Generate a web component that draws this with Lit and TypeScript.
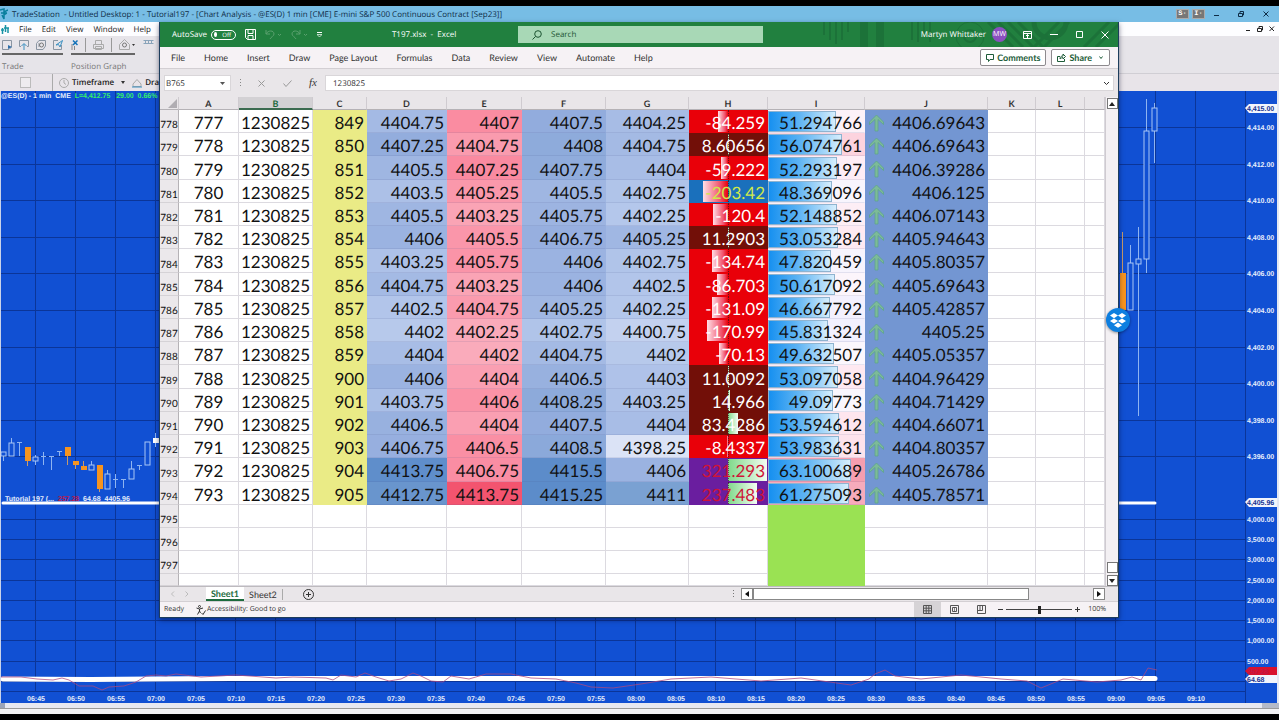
import { LitElement, html, svg, css } from "lit";
import { customElement } from "lit/decorators.js";
import { classMap } from "lit/directives/class-map.js";
import { styleMap } from "lit/directives/style-map.js";

type Stop = [number, number[]];

/* Colour scales of the conditional formatting. */
const BLUE: Stop[] = [
  [4398, [221, 229, 247]],
  [4402.5, [178, 197, 234]],
  [4407, [149, 174, 222]],
  [4411, [122, 161, 210]],
  [4414, [92, 140, 202]],
];
const PINK: Stop[] = [
  [4402, [250, 171, 187]],
  [4404.75, [250, 155, 174]],
  [4407.25, [250, 138, 160]],
  [4413.75, [243, 84, 111]],
];
const HEAT: Stop[] = [
  [45, [240, 238, 254]],
  [50, [252, 248, 253]],
  [53, [254, 234, 242]],
  [56, [252, 212, 223]],
  [63, [246, 158, 175]],
];

function shade(stops: Stop[], v: number): string {
  const last = stops.length - 1;
  if (v <= stops[0][0]) return `rgb(${stops[0][1].join(",")})`;
  if (v >= stops[last][0]) return `rgb(${stops[last][1].join(",")})`;
  const i = stops.findIndex((s) => s[0] > v);
  const [a, ca] = stops[i - 1];
  const [b, cb] = stops[i];
  const t = (v - a) / (b - a);
  return `rgb(${ca.map((c, k) => Math.round(c + (cb[k] - c) * t)).join(",")})`;
}

const ROWS: string[][] = `
777 849 4404.75 4407 4407.5 4404.25 -84.259 51.294766 4406.69643
778 850 4407.25 4404.75 4408 4404.75 8.60656 56.074761 4406.69643
779 851 4405.5 4407.25 4407.75 4404 -59.222 52.293197 4406.39286
780 852 4403.5 4405.25 4405.5 4402.75 -203.42 48.369096 4406.125
781 853 4405.5 4403.25 4405.75 4402.25 -120.4 52.148852 4406.07143
782 854 4406 4405.5 4406.75 4405.25 11.2903 53.053284 4405.94643
783 855 4403.25 4405.75 4406 4402.75 -134.74 47.820459 4405.80357
784 856 4404.75 4403.25 4406 4402.5 -86.703 50.617092 4405.69643
785 857 4402.5 4404.75 4405.25 4402.25 -131.09 46.667792 4405.42857
786 858 4402 4402.25 4402.75 4400.75 -170.99 45.831324 4405.25
787 859 4404 4402 4404.75 4402 -70.13 49.632507 4405.05357
788 900 4406 4404 4406.5 4403 11.0092 53.097058 4404.96429
789 901 4403.75 4406 4408.25 4403.25 14.966 49.09773 4404.71429
790 902 4406.5 4404 4407.5 4404 83.4286 53.594612 4404.66071
791 903 4406.75 4406.5 4408.5 4398.25 -8.4337 53.983631 4404.80357
792 904 4413.75 4406.75 4415.5 4406 321.293 63.100689 4405.26786
793 905 4412.75 4413.75 4415.25 4411 237.483 61.275093 4405.78571
`.trim().split("\n").map((l) => l.split(" "));

@customElement("price-chart")
export class PriceChart extends LitElement {
  static styles = css`
    :host { display: flex; flex: 1; min-height: 0; background: #1150d3; border-left: 1px solid #c9d3ea; border-right: 2px solid #e4e8f2; font-family: "Liberation Sans", Arial, sans-serif; overflow: hidden; }
    .plot { flex: 1; min-width: 0; height: 100%; overflow: hidden; }
    .axis { width: 32px; height: 100%; overflow: visible; }
    .grid { stroke: #0b3598; stroke-width: 1; }
    .wick { stroke: #8fb4f0; stroke-width: 1; }
    .box { fill: #1150d3; stroke: #a9c6f5; stroke-width: 1; }
    .down { fill: #f7941f; }
    .wick-down { stroke: #c79a6a; stroke-width: 1; }
    .lbl { fill: #e6eefc; font-size: 7px; font-weight: 700; }
    .time { text-anchor: middle; }
    .green { fill: #35f06a; }
    .red { fill: #c01848; }
    .dark { fill: #12308f; font-size: 7px; font-weight: 700; }
    .band { fill: none; stroke: #fff; stroke-linecap: round; }
    .trace { fill: none; stroke: #b0487f; stroke-width: 1; opacity: 0.75; }
  `;

  /* Canvas y positions are measured from the top of the plot. */
  private upper: [string, number][] = ["14", "12", "10", "08", "06", "04", "02", "00"]
    .map((n, i): [string, number] => [`4,4${n}.00`, Math.round(36 + i * 36.6)])
    .concat([["4,398.00", 329], ["4,396.00", 365]]);

  private lower: [string, number][] = [
    ["4,000.00", 428], ["3,500.00", 448], ["3,000.00", 468], ["2,500.00", 489], ["2,000.00", 509],
    ["1,500.00", 529], ["1,000.00", 549], ["500.00", 570],
  ];

  /* x, wick top, wick bottom, body top, body bottom, kind */
  private candles: [number, number, number, number, number, string][] = [
    [3, 361, 370, 361, 365, "u"], [11, 347, 365, 352, 365, "u"], [19, 351, 365, 351, 351, "t"],
    [27, 356, 375, 356, 370, "d"], [35, 364, 374, 366, 370, "u"], [43, 361, 374, 365, 365, "t"],
    [51, 365, 379, 365, 365, "t"], [59, 360, 365, 360, 360, "t"], [67, 356, 374, 356, 365, "d"],
    [75, 370, 378, 370, 374, "d"], [83, 370, 379, 375, 379, "d"], [91, 370, 379, 374, 379, "u"],
    [99, 374, 401, 374, 398, "d"], [107, 379, 398, 383, 398, "u"], [115, 383, 397, 388, 388, "t"],
    [123, 388, 397, 388, 388, "t"], [131, 370, 388, 378, 388, "u"], [139, 374, 379, 374, 374, "t"],
    [147, 351, 374, 351, 374, "u"], [155, 342, 356, 347, 352, "w"],
    [1122, 141, 182, 182, 219, "d"], [1130, 154, 219, 172, 219, "u"], [1138, 136, 325, 168, 173, "u"],
    [1146, 8, 182, 40, 168, "u"], [1154, 12, 72, 17, 40, "u"],
  ];

  private body(x: number, top: number, bottom: number, kind: string) {
    if (kind === "t") {
      return svg`<line class="wick" x1=${x - 3} x2=${x + 2} y1=${top + 0.5} y2=${top + 0.5}></line>`;
    }
    const width = kind === "u" ? 5 : 6;
    const fill = kind === "w" ? "#fff" : null;
    return svg`<rect class=${kind === "u" ? "box" : kind === "d" ? "down" : ""} fill=${fill ?? "none"} x=${x - 3} y=${top} width=${width} height=${bottom - top}></rect>`;
  }

  render() {
    const times: string[] = [];
    for (let m = 6 * 60 + 45; m <= 9 * 60 + 10; m += 5) {
      times.push(`${String(Math.floor(m / 60)).padStart(2, "0")}:${String(m % 60).padStart(2, "0")}`);
    }
    const ys = [...this.upper, ...this.lower].map((l) => l[1]);
    return html`
      <svg class="plot" role="img" aria-label="One minute price chart">
        ${[...ys, 590, 600].map((y) => svg`<line class="grid" x1="0" x2="100%" y1=${y + 0.5} y2=${y + 0.5}></line>`)}
        ${times.map((t, i) => svg`
          <line class="grid" x1=${34.5 + i * 40} x2=${34.5 + i * 40} y1="0" y2="600"></line>
          <text class="lbl time" x=${35 + i * 40} y="610">${t}</text>`)}
        ${this.candles.map(([x, wt, wb, bt, bb, k]) => svg`
          <line class=${k === "d" ? "wick-down" : "wick"} x1=${x - 0.5} x2=${x - 0.5} y1=${wt} y2=${wb}></line>
          ${this.body(x, bt, bb, k)}`)}
        <path class="band" stroke-width="3" d="M2 412H1154"></path>
        <path class="band" stroke-width="5" d="M2 588L90 588.600 150 588 230 587.500 H1154"></path>
        <path class="trace" d="M0 586 20 586 36 588 52 589 61 587 68 589 78 595 92 595 101 599 108 596 123 595 135 591 145 585 155 584 165 585 175 583 200 586 235 584 275 587 292 586 325 587 332 589 340 584 355 586 364 582 375 586 388 590 400 588 412 582 420 585 430 590 442 591 450 585 468 588 485 583 510 583 530 587 555 588 575 592 590 596 612 597 640 593 670 588 710 586 760 590 800 587 850 594 868 588 874 583 884 579 894 585 920 588 960 584 1000 588 1026 590 1040 597 1062 588 1096 591 1120 589 1131 586 1140 589 1147 577 1156 579"></path>
        <text class="lbl" x="0" y="7">@ES(D) - 1 min&#160; CME&#160; <tspan class="green">L=4,412.75&#160;&#160; 29.00&#160; 0.66%</tspan></text>
        <text class="lbl" x="4" y="410">Tutorial 197 (...&#160; <tspan class="red">257.28</tspan>&#160; 64.68&#160; 4405.96</text>
      </svg>
      <svg class="axis" role="img" aria-label="Price scale">
        <line class="grid" x1="0.500" x2="0.500" y1="0" y2="612"></line>
        ${[...this.upper, ...this.lower].map(([t, y]) => svg`<text class="lbl" x="2" y=${y + 3}>${t}</text>`)}
        <path fill="#f2f5fc" d="M0 17 4 13H32V22H4Z"></path><text class="dark" x="2" y="20">4,415.00</text>
        <path fill="#f2f5fc" d="M0 411 4 407H32V416H4Z"></path><text class="dark" x="2" y="414">4,405.96</text>
        <path fill="#d8122c" d="M0 580 4 576H32V584H4Z"></path><text class="lbl red" x="2" y="583">257.28</text>
        <path fill="#f2f5fc" d="M0 588 4 584H32V592H4Z"></path><text class="dark" x="2" y="591">64.68</text>
      </svg>`;
  }
}

@customElement("sheet-grid")
export class SheetGrid extends LitElement {
  static styles = css`
    :host { display: flex; flex: 1; min-height: 0; font-family: Lato, "Open Sans", sans-serif; color: #111; }
    table { flex: 1; min-width: 0; display: grid; grid-template-rows: 13px 1fr; background: #fff; }
    thead, tbody { display: grid; min-height: 0; }
    tbody { grid-template-rows: repeat(20, minmax(0, 2fr)) minmax(0, 1fr); }
    tr { display: grid; grid-template-columns: 19px 60px 74px 54px 80px 75px 84px 83px 79px 97px 123px 48px 49px 1fr; min-height: 0; }
    th, td { padding: 0; box-sizing: border-box; min-width: 0; position: relative; overflow: hidden; white-space: nowrap; }
    thead th { background: #e9e6e9; border-right: 1px solid #cfcbd0; border-bottom: 1px solid #b5b2b6; font-size: 9px; line-height: 14px; font-weight: 700; color: #333; }
    thead th.on { background: #d3d1d4; border-bottom: 2px solid #3b6b50; color: #1e6b40; }
    .corner { display: flex; align-items: flex-end; justify-content: flex-end; }
    tbody th { background: #ebe8eb; border-right: 1px solid #b5b2b6; border-bottom: 1px solid #d5d2d6; font-size: 10px; font-weight: 400; display: flex; align-items: flex-end; justify-content: center; line-height: 13px; }
    td { border-right: 1px solid #dcdae0; border-bottom: 1px solid #dcdae0; display: flex; align-items: center; justify-content: flex-end; padding: 4px 2px 0 0; font-size: 17px; line-height: 18px; }
    td.mid { justify-content: center; padding-right: 0; }
    td.fill { border-right-color: transparent; border-bottom-color: rgba(70, 80, 140, 0.12); }
    td.year { background: #eaeb86; border-color: #eaeb86; }
    td.avg { background: #7396d2; border-color: #7396d2; }
    td.green { background: #9ae253; border-color: #9ae253; }
    td.h { background: #e90009; color: #fff; border-color: transparent; }
    td.h.pos { background: #720f08; }
    td.h.low { background: #1a70bc; color: #cfe94a; }
    td.h.high { background: #6a1e9f; color: #cf1437; }
    td span { position: relative; }
    .bar { position: absolute; top: 1px; bottom: 0; }
    .neg { right: 50%; background: linear-gradient(90deg, #ffdfe6, #f0506a 70%, #e90009); }
    .up { left: 50%; background: linear-gradient(90deg, #7fd98a, #f4fcf2); }
    .zero { position: absolute; left: 50%; top: 0; bottom: 0; border-left: 1px dotted rgba(60, 20, 30, 0.7); }
    .data { left: 0; background: linear-gradient(90deg, #1690f0, #5db3f3 45%, #d6eefd); border: 1px solid #8fb3cf; box-sizing: border-box; }
    .arrow { position: absolute; left: 3px; top: 4px; }
    .vscroll { width: 13px; background: #f3f0f3; border-left: 1px solid #cfcbd0; display: flex; flex-direction: column; align-items: center; box-sizing: border-box; padding-top: 1px; }
    .sb { width: 11px; height: 11px; box-sizing: border-box; border: 1px solid #777; background: #fff; padding: 0; display: flex; align-items: center; justify-content: center; flex: none; }
    .track { flex: 1; display: flex; align-items: flex-end; padding-bottom: 2px; }
  `;

  private row(r: string[], i: number) {
    const [a, c, d, e, f, g, h, s, j] = r;
    const hv = Number(h);
    const bar = `${(Math.min(Math.abs(hv), 321) / 321) * 50}%`;
    const color = (stops: Stop[], v: string) => styleMap({ background: shade(stops, Number(v)) });
    return html`<tr>
      <th scope="row">${778 + i}</th>
      <td class="mid">${a}</td>
      <td class="mid">1230825</td>
      <td class="year">${c}</td>
      <td class="fill" style=${color(BLUE, d)}>${d}</td>
      <td class="fill" style=${color(PINK, e)}>${e}</td>
      <td class="fill" style=${color(BLUE, f)}>${f}</td>
      <td class="fill" style=${color(BLUE, g)}>${g}</td>
      <td class=${classMap({ h: true, pos: hv > 0, low: hv < -200, high: hv > 200 })}>
        <i class=${hv < 0 ? "bar neg" : "bar up"} style=${styleMap({ width: bar })}></i><i class="zero"></i><span>${h}</span>
      </td>
      <td class="fill" style=${color(HEAT, s)}>
        <i class="bar data" style=${styleMap({ width: `${Number(s) * 1.375}%` })}></i><span>${s}</span>
      </td>
      <td class="avg">
        <svg class="arrow" width="17" height="18" viewBox="0 0 17 18"><path d="M8.500 1 15.500 8V10.500L10 5.500V17H7V5.500L1.500 10.500V8Z" fill="#7dbb98" stroke="#5da48c" stroke-width="0.800"></path></svg>
        <span>${j}</span>
      </td>
      <td></td><td></td><td></td>
    </tr>`;
  }

  render() {
    const blank = [795, 796, 797, ""];
    return html`
      <table aria-label="Sheet1">
        <thead><tr>
          <th class="corner" aria-label="Select all"><svg width="11" height="10"><path d="M10 0V9H1Z" fill="#b0adb2"></path></svg></th>
          ${[..."ABCDEFGHIJKL"].map((l) => html`<th scope="col" class=${l === "B" ? "on" : ""}>${l}</th>`)}
          <th></th>
        </tr></thead>
        <tbody>
          ${ROWS.map((r, i) => this.row(r, i))}
          ${blank.map((n) => html`<tr><th scope="row">${n}</th>${[..."ABCDEFGHIJKLM"].map((l) => html`<td class=${l === "I" ? "green" : ""}></td>`)}</tr>`)}
        </tbody>
      </table>
      <div class="vscroll">
        <button class="sb" aria-label="Scroll up"><svg width="6" height="4"><path d="M0 4 3 0 6 4Z" fill="#222"></path></svg></button>
        <div class="track"><div class="sb"></div></div>
        <button class="sb" aria-label="Scroll down"><svg width="6" height="4"><path d="M0 0 3 4 6 0Z" fill="#222"></path></svg></button>
      </div>`;
  }
}

@customElement("excel-window")
export class ExcelWindow extends LitElement {
  static styles = css`
    :host { display: flex; flex-direction: column; background: #f6f2f5; border: 1px solid #1d3d5c; border-top: 0; box-sizing: border-box; font-family: "Open Sans", "Noto Sans", sans-serif; font-size: 8px; color: #333; box-shadow: 0 2px 5px rgba(0, 0, 40, 0.5); text-rendering: geometricPrecision; }
    button { font: inherit; color: inherit; background: none; border: 0; padding: 0; white-space: nowrap; display: flex; align-items: center; text-rendering: inherit; }
    input { font: inherit; color: inherit; border: 0; padding: 0; margin: 0; outline: 0; min-width: 0; text-rendering: inherit; }
    svg { display: block; flex: none; }
    .line { fill: none; stroke: currentColor; stroke-width: 1; }
    .title { position: relative; height: 25px; flex: none; display: flex; align-items: center; background: #21803f; color: #fff; padding-left: 5px; }
    .art { position: absolute; right: 0; top: 0; height: 25px; }
    .left, .right { flex: 1; display: flex; align-items: center; position: relative; }
    .left { padding-left: 7px; }
    .right { justify-content: flex-end; padding-right: 9px; }
    .autosave { display: flex; align-items: center; gap: 4px; }
    .switch { width: 25px; height: 10px; box-sizing: border-box; border: 1px solid #fff; border-radius: 5px; padding: 0 4px 0 2px; gap: 5px; font-size: 6px; justify-content: space-between; }
    .knob { width: 5px; height: 5px; border-radius: 50%; background: #fff; }
    .save { margin-left: 9px; }
    .hist { margin-left: 9px; display: flex; align-items: center; gap: 9px; color: #5aa06e; }
    .name { margin-left: 70px; white-space: pre; }
    .search { position: relative; width: 245px; height: 17px; flex: none; background: #a8d8b6; display: flex; align-items: center; color: #1d5432; gap: 9px; padding-left: 14px; box-sizing: border-box; }
    .search input { background: transparent; flex: 1; }
    .search input::placeholder { color: #1d5432; opacity: 1; }
    .avatar { width: 15px; height: 15px; border-radius: 50%; background: #8a4fc0; font-size: 7px; display: flex; align-items: center; justify-content: center; margin-left: 6px; }
    .wc { display: flex; align-items: center; gap: 18px; margin-left: 16px; }
    .ribbon { flex: none; height: 22px; display: flex; align-items: center; gap: 19px; padding: 0 8px 0 11px; background: #f6f2f5; border-bottom: 1px solid #d3cfd3; box-sizing: border-box; font-family: Lato, "Open Sans", sans-serif; font-size: 9px; }
    .acts { margin-left: auto; display: flex; gap: 5px; }
    .act { box-sizing: border-box; height: 17px; border: 1px solid #8d8a8e; border-radius: 2px; background: #fff; color: #1d5c38; font-weight: 700; padding: 0 5px; gap: 3px; }
    .formula { flex: none; height: 28px; display: flex; align-items: center; padding: 0 4px; background: #e9e6e9; }
    .field { background: #fff; height: 16px; display: flex; align-items: center; box-sizing: border-box; border: 1px solid #d9d6d9; padding: 0 5px 0 1px; }
    .ref { width: 67px; }
    .ref input { width: 55px; }
    .tools { width: 94px; display: flex; align-items: center; justify-content: space-between; color: #999; padding: 0 8px 0 9px; box-sizing: border-box; }
    .fx { font: italic 11px "Liberation Serif", serif; color: #333; }
    .value { flex: 1; padding: 0 3px 0 7px; }
    .value input { flex: 1; }
    .tabs { flex: none; height: 15px; display: flex; align-items: center; background: #e9e6e9; border-top: 1px solid #bdbabe; box-sizing: border-box; padding: 0 13px 0 11px; font-size: 9px; }
    .nav { display: flex; gap: 10px; color: #bbb; width: 35px; }
    .tab { height: 14px; padding: 0 5px; }
    .tab.on { background: #fff; color: #1d6b3d; font-family: Lato, sans-serif; font-weight: 700; border-bottom: 2px solid #1d6b3d; box-sizing: border-box; }
    .tab.off { border-right: 1px solid #aaa; height: 11px; font-family: Lato, sans-serif; }
    .plus { margin-left: 20px; }
    .hs { margin-left: auto; display: flex; align-items: center; width: 375px; }
    .sb { width: 12px; height: 12px; box-sizing: border-box; border: 1px solid #888; background: #fff; justify-content: center; }
    .thumb { width: 276px; height: 12px; box-sizing: border-box; border: 1px solid #888; background: #fff; }
    .push { margin-left: auto; }
    .status { flex: none; height: 16px; display: flex; align-items: center; border-top: 1px solid #d3cfd3; box-sizing: border-box; font-size: 7px; padding: 0 12px 0 4px; }
    .acc { display: flex; align-items: center; gap: 1px; margin-left: 12px; }
    .views { margin-left: auto; display: flex; color: #555; }
    .view { width: 27px; height: 15px; justify-content: center; }
    .view.on { background: #d6d3d6; }
    .zoom { display: flex; align-items: center; gap: 3px; margin-left: 3px; }
    .range { appearance: none; -webkit-appearance: none; width: 66px; height: 9px; background: linear-gradient(#444, #444) center / 100% 1px no-repeat; }
    .range::-webkit-slider-thumb { -webkit-appearance: none; width: 3px; height: 8px; background: #222; }
    .pct { margin-left: 5px; }
  `;

  render() {
    const tabs = ["File", "Home", "Insert", "Draw", "Page Layout", "Formulas", "Data", "Review", "View", "Automate", "Help"];
    return html`
      <header class="title">
        <svg class="art" width="306" height="25" aria-hidden="true">
          <g fill="none" stroke="#1c7239" stroke-width="2">
            <path d="M12 0V13M18 0V18M24 0V22M30 0V18M36 0V10M100 0V18M106 0V20M112 0V12M118 0V20"></path>
            <path d="M52 0V25M68 0V25" stroke-width="8"></path>
            <path d="M176 0 201 25M186 0 211 25M196 0 221 25M206 0 231 25M222 25 247 0M232 25 257 0M272 25 297 0M284 25 309 0" stroke-width="3"></path>
            <circle cx="158" cy="14" r="14" stroke-width="1"></circle><circle cx="158" cy="14" r="6"></circle>
            <circle cx="238" cy="0" r="16" stroke-width="5"></circle>
          </g>
        </svg>
        <div class="left">
          <label class="autosave">AutoSave<button class="switch" role="switch" aria-checked="false"><i class="knob"></i>Off</button></label>
          <button class="save" aria-label="Save"><svg class="line" width="11" height="11"><path d="M.5.500H10.500V10.500H2.500L.5 8.500ZM3 .5V4.500H8V.5M3 10.500V6.500H8V10.500"></path></svg></button>
          <div class="hist">
            <button aria-label="Undo"><svg class="line" width="17" height="11"><path d="M1 1V5H5M1 5C3 1 9 1 9 5 9 7 6 8 5 10M13 5 14.500 6.500 16 5"></path></svg></button>
            <button aria-label="Redo"><svg class="line" width="17" height="11"><path d="M9 1V5H5M9 5C7 1 1 1 1 5 1 7 4 8 5 10M13 5 14.500 6.500 16 5"></path></svg></button>
            <button aria-label="Customize"><svg width="5" height="6"><path d="M0 .5H5" stroke="#fff"></path><path d="M0 2.500H5L2.500 5Z" fill="none" stroke="#fff" stroke-width="0.700"></path></svg></button>
          </div>
          <span class="name">T197.xlsx  -  Excel</span>
        </div>
        <label class="search">
          <svg class="line" width="10" height="10" aria-hidden="true"><circle cx="6" cy="4" r="3.300"></circle><path d="M3.500 6.500.5 9.500"></path></svg>
          <input placeholder="Search" aria-label="Search">
        </label>
        <div class="right">
          <span>Martyn Whittaker</span><span class="avatar">MW</span>
          <div class="wc">
            <button aria-label="Ribbon display options"><svg class="line" width="9" height="8"><path d="M.5.500H8.500V7.500H.5ZM.5 2.500H8.500M4.500 7V3.500M3 5 4.500 3.500 6 5"></path></svg></button>
            <button aria-label="Minimize"><svg class="line" width="8" height="7"><path d="M0 3.500H8"></path></svg></button>
            <button aria-label="Maximize"><svg class="line" width="7" height="7"><path d="M.5.500H6.500V6.500H.5Z"></path></svg></button>
            <button aria-label="Close"><svg class="line" width="8" height="8"><path d="M.5.500 7.500 7.500M7.500.500.500 7.500"></path></svg></button>
          </div>
        </div>
      </header>
      <nav class="ribbon">
        ${tabs.map((t) => html`<button>${t}</button>`)}
        <div class="acts">
          <button class="act"><svg class="line" width="8" height="8"><path d="M.5.500H7.500V5.500H4L2.500 7.500V5.500H.5Z"></path></svg>Comments</button>
          <button class="act"><svg class="line" width="9" height="9"><path d="M3 3.500H.5V8.500H7.500V6M3 6C3 4 4 3 6 3V1L8.500 3.500 6 6V4.500C5 4.500 4 5 3 6Z"></path></svg>Share<svg class="line" width="9" height="4"><path d="M4.500.500 6 2.500 7.500.500"></path></svg></button>
        </div>
      </nav>
      <div class="formula">
        <div class="field ref"><input value="B765" aria-label="Name box"><svg width="5" height="3"><path d="M0 0H5L2.500 3Z" fill="#555"></path></svg></div>
        <div class="tools">
          <svg width="1" height="9"><path d="M.5 0V9" stroke="#888" stroke-dasharray="1 2"></path></svg>
          <button aria-label="Cancel"><svg class="line" width="7" height="7"><path d="M.5.500 6.500 6.500M6.500.500.500 6.500"></path></svg></button>
          <button aria-label="Enter"><svg class="line" width="9" height="7"><path d="M.5 3.500 3 6.500 8.500.500"></path></svg></button>
          <button class="fx" aria-label="Insert function">fx</button>
        </div>
        <div class="field value"><input value="1230825" aria-label="Formula bar"><svg class="line" width="7" height="5"><path d="M1 1 3.500 3.500 6 1"></path></svg></div>
      </div>
      <sheet-grid></sheet-grid>
      <div class="tabs">
        <div class="nav">
          <svg class="line" width="4" height="6"><path d="M3 .5.500 3 3 5.500"></path></svg>
          <svg class="line" width="4" height="6"><path d="M.5.500 3 3 .5 5.500"></path></svg>
        </div>
        <button class="tab on">Sheet1</button><button class="tab off">Sheet2</button>
        <button class="plus" aria-label="New sheet"><svg class="line" width="11" height="11"><circle cx="5.500" cy="5.500" r="5"></circle><path d="M5.500 3V8M3 5.500H8"></path></svg></button>
        <div class="hs">
          <svg width="11" height="9"><path d="M3.500 0V9" stroke="#777" stroke-dasharray="1 2"></path></svg>
          <button class="sb" aria-label="Scroll left"><svg width="4" height="6"><path d="M4 0V6L0 3Z" fill="#111"></path></svg></button>
          <div class="thumb"></div>
          <button class="sb push" aria-label="Scroll right"><svg width="4" height="6"><path d="M0 0V6L4 3Z" fill="#111"></path></svg></button>
        </div>
      </div>
      <footer class="status">
        <span>Ready</span>
        <span class="acc"><svg class="line" width="10" height="10"><circle cx="3.500" cy="1.500" r="1"></circle><path d="M.5 3 3.500 4 7 3M3.500 4V6L1.500 9.500M3.500 6 4.500 8M5.500 8 7 9.500 9.500 5.500"></path></svg>Accessibility: Good to go</span>
        <div class="views">
          <button class="view on" aria-label="Normal"><svg class="line" width="9" height="9"><path d="M.5.500H8.500V8.500H.5ZM.5 3.200H8.500M.5 5.800H8.500M3.200.500V8.500M5.800.500V8.500"></path></svg></button>
          <button class="view" aria-label="Page layout"><svg class="line" width="9" height="9"><path d="M.5.500H8.500V8.500H.5ZM2.500 2.500H6.500V6.500H2.500Z"></path><path d="M4.500 2V7" stroke-width="0.700"></path></svg></button>
          <button class="view" aria-label="Page break preview"><svg class="line" width="9" height="9"><path d="M.5.500H8.500V8.500H.5ZM.5 5.500H5.500V.5M3 .5V5"></path></svg></button>
        </div>
        <div class="zoom">
          <button aria-label="Zoom out"><svg class="line" width="5" height="5"><path d="M0 2.500H5"></path></svg></button>
          <input class="range" type="range" min="0" max="100" value="50" aria-label="Zoom">
          <button aria-label="Zoom in"><svg class="line" width="5" height="5"><path d="M0 2.500H5M2.500 0V5"></path></svg></button>
          <span class="pct">100%</span>
        </div>
      </footer>`;
  }
}

@customElement("app-root")
export class AppRoot extends LitElement {
  static styles = css`
    :host { display: flex; flex-direction: column; height: 100vh; position: relative; overflow: hidden; background: #000; padding: 6px 0; box-sizing: border-box; font-family: "Open Sans", "Noto Sans", sans-serif; font-size: 8px; color: #222; text-rendering: geometricPrecision; }
    button { font: inherit; color: inherit; background: none; border: 0; padding: 0; display: flex; align-items: center; white-space: nowrap; text-rendering: inherit; }
    svg { display: block; flex: none; }
    .line { fill: none; stroke: currentColor; stroke-width: 1; }
    .title { height: 16px; flex: none; display: flex; align-items: center; background: #77bde5; padding: 0 10px 0 0; color: #0e2c46; white-space: pre; }
    .logo { margin-right: 4px; }
    .wc { margin-left: auto; display: flex; align-items: center; gap: 19px; }
    .chips { display: flex; gap: 3px; margin-right: -10px; }
    .chip { width: 13px; height: 10px; box-sizing: border-box; background: #777; border: 1px solid #aaa; color: #fff; font: 700 7px "Liberation Mono", monospace; justify-content: center; }
    .menu { height: 14px; flex: none; display: flex; align-items: center; background: #fdfdff; gap: 10px; padding: 0 4px 0 1px; }
    .mdi { margin-left: auto; display: flex; align-items: center; gap: 6px; }
    .toolbar { height: 38px; flex: none; background: #e6e4e9; border-bottom: 1px solid #d0ced4; box-sizing: border-box; display: flex; gap: 8px; padding: 0 2px; color: #777; }
    .group { display: flex; flex-direction: column; gap: 6px; }
    .icons { height: 19px; box-sizing: border-box; border-bottom: 2px solid #666; display: flex; align-items: center; gap: 7px; }
    .subbar { height: 17px; flex: none; background: #e8e4e9; display: flex; align-items: center; padding-left: 20px; }
    .tick { appearance: none; -webkit-appearance: none; width: 11px; height: 11px; margin: 0 21px 0 0; border: 1px solid #bbb; background: #eeecef; }
    .sub { gap: 3px; border-left: 1px solid #aaa; padding-left: 6px; height: 17px; font-weight: 600; }
    .sub + .sub { border: 0; }
    .scroll { height: 6px; flex: none; background: #e7e8f0; border-bottom: 1px solid #999; display: flex; justify-content: space-between; box-sizing: border-box; }
    .knob { width: 5px; background: #9ba4b8; }
    .knob.wide { width: 17px; background: #b5bac8; }
    .foot { height: 5px; flex: none; background: #f3f3f5; }
    excel-window { position: absolute; top: 22px; left: 159px; right: 160px; bottom: 102px; }
    .drop { position: absolute; right: 149px; top: 308px; width: 24px; height: 24px; border-radius: 50%; background: #0d7fe0; box-shadow: 0 1px 3px rgba(0, 0, 0, 0.4); justify-content: center; }
  `;

  render() {
    return html`
      <header class="title">
        <svg class="logo" width="8" height="14" viewBox="0 0 8 14"><path d="M0 3 4 2V12L2 8M4 5 8 3M4 8 7 6M1 6H7" fill="none" stroke="#0b7f9e" stroke-width="1.500"></path></svg>
        <span>TradeStation  - Untitled Desktop: 1 - Tutorial197 - [Chart Analysis - @ES(D) 1 min [CME] E-mini S&amp;P 500 Continuous Contract [Sep23]]</span>
        <div class="wc">
          <div class="chips"><button class="chip">S·</button><button class="chip">I·</button></div>
          <button aria-label="Minimize"><svg class="line" width="5" height="6"><path d="M0 4.500H5"></path></svg></button>
          <button aria-label="Restore"><svg class="line" width="6" height="6"><path d="M.5 2.500H4.500V5.500H.5ZM2 2V.5H5.500V4H4.500"></path></svg></button>
          <button aria-label="Close"><svg class="line" width="6" height="6"><path d="M.5.500 5.500 5.500M5.500.500.500 5.500"></path></svg></button>
        </div>
      </header>
      <nav class="menu">
        <svg width="8" height="9"><path d="M1.500 3V9M4.500 0V7M7 3V8M0 5H3M3 3H8" stroke="#1793a5" stroke-width="1.500"></path></svg>
        ${["File", "Edit", "View", "Window", "Help"].map((m) => html`<button>${m}</button>`)}
        <div class="mdi">
          <button aria-label="Minimize chart"><svg class="line" width="5" height="6"><path d="M0 4.500H4"></path></svg></button>
          <button aria-label="Restore chart"><svg class="line" width="6" height="6"><path d="M.5 2.500H4.500V5.500H.5ZM2 2V.5H5.500V4H4.500"></path></svg></button>
          <button aria-label="Close chart"><svg class="line" width="6" height="6"><path d="M.5.500 5 5M5 .5.500 5"></path></svg></button>
        </div>
      </nav>
      <div class="toolbar">
        <div class="group">
          <div class="icons">
            <svg class="line" width="10" height="10"><path d="M.5.500H9.500V7L7 9.500H.5Z" stroke="#8a95a2"></path><path d="M6 5 10 7 6 9Z" fill="#2f6ea8" stroke="none"></path></svg>
            <svg class="line" width="10" height="10"><path d="M2 6.500H.5V.5H9.500V6.500H8" stroke="#8a95a2"></path><path d="M5 10V4M2.500 6 5 3.500 7.500 6" stroke="#3a8fc0"></path></svg>
            <svg class="line" width="10" height="10"><path d="M.5 3.500 3 .5H9.500V6L7 9.500H.5ZM3 3V7" stroke="#8a95a2"></path><circle cx="5.500" cy="5" r="2"></circle></svg>
            <svg class="line" width="10" height="10"><path d="M5 .5H.5V9.500H8.500V5" stroke="#8a95a2"></path><path d="M3 5 9.500.500 7 7 5.500 4.500Z" stroke="#3a8fc0"></path></svg>
          </div>
          <span>Trade</span>
        </div>
        <div class="group">
          <div class="icons">
            <svg width="7" height="12"><path d="M1 11V5M3.500 11V7" stroke="#888"></path><path d="M2 1.500 6.500 6M6.500 1.500 2 6" stroke="#1272b8" stroke-width="1.500"></path></svg>
            <svg width="1" height="14"><path d="M.5 0V14" stroke="#999"></path></svg>
            <svg class="line" width="11" height="10"><path d="M2.500 4V.5H8.500V4M.5 4.500H10.500V8.500H.5ZM2.500 6.500H8.500V9.500H2.500Z" stroke="#aaa"></path></svg>
            <svg width="1" height="14"><path d="M.5 0V14" stroke="#999"></path></svg>
            <svg class="line" width="16" height="11"><path d="M.5 5.500 5.500.500 10.500 5.500V10.500H.5Z" stroke="#aaa"></path><circle cx="5.500" cy="6" r="2"></circle><path d="M13 5H16L14.500 7Z" fill="#333" stroke="none"></path></svg>
          </div>
          <span>Position Graph</span>
        </div>
        <svg class="line" width="26" height="18"><path d="M.5 4.500H10.500M.5 7.500H10.500M2.500 4V8M5.500 4V8M8.500 4V8M18 13 22 5 26 13Z" stroke="#8aa4ba"></path></svg>
      </div>
      <div class="subbar">
        <input class="tick" type="checkbox" aria-label="Symbol link">
        <button class="sub"><svg class="line" width="10" height="10"><circle cx="5" cy="5" r="4.500" stroke="#aaa"></circle><path d="M5 2V5L7 6.500" stroke="#aaa"></path></svg>Timeframe<svg width="9" height="3"><path d="M4 0H8L6 3Z" fill="#333"></path></svg></button>
        <button class="sub"><svg class="line" width="10" height="10"><path d="M1 6 5 1.500 9 6V8.500H1Z" stroke="#aaa"></path><path d="M0 9H10" stroke="#3a8fc0"></path></svg>Drawing</button>
      </div>
      <price-chart></price-chart>
      <div class="scroll"><i class="knob"></i><i class="knob wide"></i></div>
      <div class="foot"></div>
      <excel-window></excel-window>
      <button class="drop" aria-label="Dropbox"><svg width="16" height="15" viewBox="0 0 16 15"><path fill="#fff" d="M4 0 8 2.600 4 5.200 0 2.600ZM12 0 16 2.600 12 5.200 8 2.600ZM4 5.400 8 8 4 10.600 0 8ZM12 5.400 16 8 12 10.600 8 8ZM8 9.600 12 12.200 8 14.800 4 12.200Z"></path></svg></button>`;
  }
}
